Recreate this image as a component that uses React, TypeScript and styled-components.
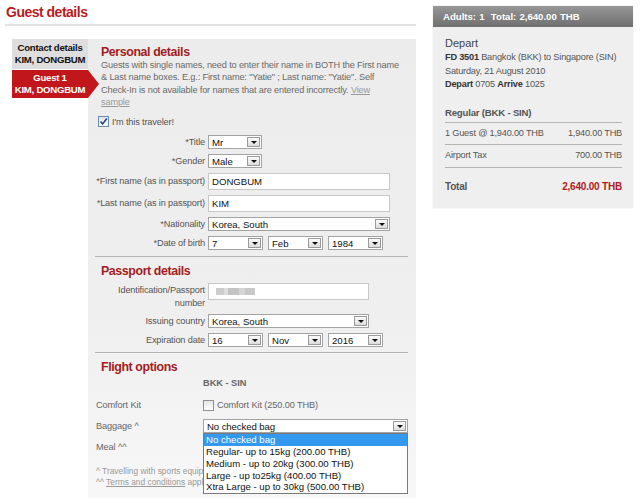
import React from "react";
import styled, { createGlobalStyle } from "styled-components";

const Global = createGlobalStyle`
  html, body { margin: 0; padding: 0; background: #fff; }
  body { font-family: "Liberation Sans", Arial, sans-serif; color: #555; width: 640px; height: 498px; overflow: hidden; }
  * { box-sizing: border-box; }
`;

const Page = styled.div`
  display: flex;
  align-items: flex-start;
  height: 498px;
`;

const Main = styled.div`
  width: 417px;
  padding-left: 5px;
  display: flex;
  flex-direction: column;
  height: 498px;
`;

const Title = styled.h1`
  margin: 0;
  padding: 3px 0 0 1px;
  font-size: 14px;
  line-height: 18px;
  letter-spacing: -0.5px;
  color: #b81c22;
  font-weight: bold;
`;

const Rule = styled.div`
  margin-top: 3px;
  height: 2px;
  background: #e2e2e2;
  width: 411px;
`;

const Body = styled.div`
  display: flex;
  margin-top: 13px;
  flex: 1;
  align-items: stretch;
`;

const Tabs = styled.div`
  width: 83px;
  padding-left: 7px;
  display: flex;
  flex-direction: column;
  gap: 1px;
  position: relative;
  z-index: 2;
`;

const Tab = styled.div<{ $active?: boolean }>`
  position: relative;
  height: ${(p) => (p.$active ? 28 : 30)}px;
  padding-top: ${(p) => (p.$active ? 2 : 3)}px;
  background: ${(p) => (p.$active ? "#c2161d" : "#dedede")};
  color: ${(p) => (p.$active ? "#fff" : "#111")};
  font-weight: bold;
  font-size: 9.6px;
  line-height: 12px;
  text-align: center;
  letter-spacing: -0.25px;
  &::after {
    content: "";
    display: ${(p) => (p.$active ? "block" : "none")};
    position: absolute;
    right: -11px;
    top: 0;
    border-top: 14px solid transparent;
    border-bottom: 14px solid transparent;
    border-left: 11px solid #c2161d;
  }
`;

const Panel = styled.div`
  width: 328px;
  background: linear-gradient(#ececec, #efefef 60%, #f7f7f7);
  padding: 6px 9px 0 13px;
  position: relative;
`;

const SectionTitle = styled.h2<{ $top?: number }>`
  margin: ${(p) => p.$top ?? 0}px 0 0;
  font-size: 12.4px;
  line-height: 14px;
  font-weight: bold;
  letter-spacing: -0.4px;
  color: #a31c22;
`;

const Note = styled.p`
  margin: 0;
  font-size: 9.2px;
  line-height: 12.3px;
  letter-spacing: -0.15px;
  color: #6a6a6a;
  width: 301px;
`;

const Link = styled.a`
  color: #9a9a9a;
  text-decoration: underline;
`;

const CheckRow = styled.label`
  display: flex;
  align-items: center;
  gap: 3px;
  margin: 8px 0 0 -3px;
  font-size: 9.2px;
  letter-spacing: -0.15px;
  color: #555;
`;

const Box = styled.span`
  width: 11px;
  height: 11px;
  border: 1px solid #6d8bb0;
  background: linear-gradient(#dfe5ec, #fff);
  display: inline-flex;
  align-items: center;
  justify-content: center;
  flex: none;
`;

const Form = styled.div<{ $top: number }>`
  display: grid;
  grid-template-columns: 114px auto;
  column-gap: 3px;
  row-gap: 5px;
  margin: ${(p) => p.$top}px 0 0 -10px;
  align-items: center;
`;

const Label = styled.div`
  text-align: right;
  font-size: 9.2px;
  line-height: 12.5px;
  letter-spacing: -0.15px;
  color: #555;
  white-space: nowrap;
  align-self: center;
`;

const TopLabel = styled(Label)`
  align-self: start;
  white-space: normal;
  padding-left: 20px;
  margin-top: 1px;
`;

const Controls = styled.div`
  display: flex;
  gap: 5px;
`;

const SelectBox = styled.div<{ $w: number }>`
  width: ${(p) => p.$w}px;
  height: 14px;
  background: #fff;
  border: 1px solid #a3a3a3;
  display: flex;
  align-items: center;
  justify-content: space-between;
  padding: 0 1px 0 3px;
  font-size: 9.6px;
  color: #111;
`;

const Arrow = styled.span`
  width: 13px;
  height: 10px;
  border: 1px solid #9a9a9a;
  background: linear-gradient(#fbfbfb, #dcdcdc);
  display: flex;
  align-items: center;
  justify-content: center;
  &::before {
    content: "";
    border-left: 3px solid transparent;
    border-right: 3px solid transparent;
    border-top: 3px solid #111;
  }
`;

const TextInput = styled.div<{ $w: number; $top?: boolean }>`
  width: ${(p) => p.$w}px;
  height: 17px;
  background: #fff;
  border: 1px solid #c8c8c8;
  display: flex;
  align-items: center;
  align-self: ${(p) => (p.$top ? "start" : "center")};
  padding: 0 3px;
  font-size: 9.6px;
  color: #111;
`;

const Blur = styled.span`
  width: 39px;
  height: 7px;
  margin-left: 4px;
  background: linear-gradient(90deg, #ccc 0 20%, #ddd 20% 30%, #c4c4c4 30% 60%, #d6d6d6 60% 75%, #c8c8c8 75%);
  filter: blur(0.6px);
`;

const Divider = styled.div<{ $top: number }>`
  height: 1px;
  background: #b5b5b5;
  margin: ${(p) => p.$top}px 0 7px -6px;
  width: 313px;
`;

const Route = styled.div`
  font-size: 9.2px;
  font-weight: bold;
  color: #666;
  margin: 3px 0 0 102px;
  line-height: 12px;
`;

const OptionGrid = styled.div`
  display: grid;
  grid-template-columns: 107px auto;
  grid-auto-rows: 14px;
  row-gap: 7px;
  margin: 9px 0 0 -5px;
  align-items: center;
  font-size: 9.2px;
  letter-spacing: -0.1px;
  color: #666;
`;

const OptCheck = styled.span`
  display: flex;
  align-items: center;
  gap: 3px;
  color: #666;
`;

const GrayBox = styled(Box)`
  border-color: #8f8f8f;
  background: linear-gradient(#e6e6e6, #fff);
`;

const DropWrap = styled.div`
  position: relative;
`;

const DropList = styled.ul`
  position: absolute;
  top: 14px;
  left: 0;
  width: 205px;
  margin: 0;
  padding: 0;
  list-style: none;
  background: #fff;
  border: 1px solid #7a7a7a;
  z-index: 5;
  font-size: 9.6px;
  letter-spacing: 0;
  color: #111;
`;

const DropItem = styled.li<{ $sel?: boolean }>`
  height: 11.8px;
  line-height: 11.8px;
  padding-left: 2px;
  background: ${(p) => (p.$sel ? "#3399ee" : "transparent")};
  color: ${(p) => (p.$sel ? "#fff" : "#111")};
`;

const Footnotes = styled.div`
  margin: 12px 0 0 -5px;
  font-size: 8.4px;
  line-height: 10.5px;
  color: #999;
  white-space: nowrap;
`;

const Side = styled.aside`
  margin: 6px 0 0 16px;
  width: 200px;
  background: #efefef;
  box-shadow: 0 0 1px #ccc;
`;

const SideHead = styled.div`
  height: 21px;
  background: linear-gradient(#979797, #6f6f6f);
  color: #fff;
  font-weight: bold;
  font-size: 9.6px;
  line-height: 21px;
  padding-left: 10px;
  word-spacing: 0.5px;
`;

const SideBody = styled.div`
  padding: 10px 11px 15px 12px;
  font-size: 9.2px;
  letter-spacing: -0.2px;
  color: #555;
  line-height: 13.4px;
  white-space: nowrap;
`;

const SideTitle = styled.div`
  font-size: 11px;
  letter-spacing: 0;
  color: #444;
  margin-bottom: 1px;
`;

const Strong = styled.b`
  color: #333;
`;

const FareName = styled.div`
  font-weight: bold;
  color: #555;
  font-size: 9.6px;
  margin-top: 14px;
  padding-bottom: 3px;
  border-bottom: 1px solid #b5b5b5;
`;

const FareRow = styled.div<{ $total?: boolean }>`
  display: flex;
  justify-content: space-between;
  padding: ${(p) => (p.$total ? "12px 0 0" : "4px 0 4px")};
  border-bottom: ${(p) => (p.$total ? "none" : "1px solid #b5b5b5")};
  font-weight: ${(p) => (p.$total ? "bold" : "normal")};
  font-size: ${(p) => (p.$total ? "10px" : "9.2px")};
`;

const Red = styled.span`
  color: #b01c22;
`;

function Select({ w, value }: { w: number; value: string }) {
  return (
    <SelectBox $w={w}>
      <span>{value}</span>
      <Arrow />
    </SelectBox>
  );
}

const Tick = () => (
  <svg width="9" height="9" viewBox="0 0 9 9">
    <path d="M1.5 4.5 L3.6 7 L7.8 1.5" stroke="#22448a" strokeWidth="1.6" fill="none" />
  </svg>
);

export default function App() {
  return (
    <>
      <Global />
      <Page>
        <Main>
          <Title>Guest details</Title>
          <Rule />
          <Body>
            <Tabs>
              <Tab>
                Contact details
                <br />
                KIM, DONGBUM
              </Tab>
              <Tab $active>
                Guest 1
                <br />
                KIM, DONGBUM
              </Tab>
            </Tabs>
            <Panel>
              <SectionTitle>Personal details</SectionTitle>
              <Note>
                Guests with single names, need to enter their name in BOTH the First name &amp; Last name boxes.
                E.g.: First name: "Yatie" ; Last name: "Yatie". Self Check-In is not available for names that are
                entered incorrectly.{" "}
                <Link>
                  View
                  <br />
                  sample
                </Link>
              </Note>
              <CheckRow>
                <Box>
                  <Tick />
                </Box>
                I'm this traveler!
              </CheckRow>
              <Form $top={8}>
                <Label>*Title</Label>
                <Select w={54} value="Mr" />
                <Label>*Gender</Label>
                <Select w={54} value="Male" />
                <Label>*First name (as in passport)</Label>
                <TextInput $w={182}>DONGBUM</TextInput>
                <Label>*Last name (as in passport)</Label>
                <TextInput $w={182}>KIM</TextInput>
                <Label>*Nationality</Label>
                <Select w={182} value="Korea, South" />
                <Label>*Date of birth</Label>
                <Controls>
                  <Select w={55} value="7" />
                  <Select w={55} value="Feb" />
                  <Select w={55} value="1984" />
                </Controls>
              </Form>
              <Divider $top={6} />
              <SectionTitle>Passport details</SectionTitle>
              <Form $top={5}>
                <TopLabel>Identification/Passport number</TopLabel>
                <TextInput $w={161} $top>
                  <Blur />
                </TextInput>
                <Label>Issuing country</Label>
                <Select w={161} value="Korea, South" />
                <Label>Expiration date</Label>
                <Controls>
                  <Select w={55} value="16" />
                  <Select w={55} value="Nov" />
                  <Select w={55} value="2016" />
                </Controls>
              </Form>
              <Divider $top={5} />
              <SectionTitle $top={3}>Flight options</SectionTitle>
              <Route>BKK - SIN</Route>
              <OptionGrid>
                <span>Comfort Kit</span>
                <OptCheck>
                  <GrayBox />
                  Comfort Kit (250.00 THB)
                </OptCheck>
                <span>Baggage ^</span>
                <DropWrap>
                  <Select w={205} value="No checked bag" />
                  <DropList>
                    <DropItem $sel>No checked bag</DropItem>
                    <DropItem>Regular- up to 15kg (200.00 THB)</DropItem>
                    <DropItem>Medium - up to 20kg (300.00 THB)</DropItem>
                    <DropItem>Large - up to25kg (400.00 THB)</DropItem>
                    <DropItem>Xtra Large - up to 30kg (500.00 THB)</DropItem>
                  </DropList>
                </DropWrap>
                <span>Meal ^^</span>
                <span />
              </OptionGrid>
              <Footnotes>
                ^ Travelling with sports equipment? Please add baggage.
                <br />
                ^^ <Link>Terms and conditions</Link> apply.
              </Footnotes>
            </Panel>
          </Body>
        </Main>
        <Side>
          <SideHead>Adults: 1&nbsp; Total: 2,640.00 THB</SideHead>
          <SideBody>
            <SideTitle>Depart</SideTitle>
            <div>
              <Strong>FD 3501</Strong> Bangkok (BKK) to Singapore (SIN)
            </div>
            <div>Saturday, 21 August 2010</div>
            <div>
              <Strong>Depart</Strong> 0705 <Strong>Arrive</Strong> 1025
            </div>
            <FareName>Regular (BKK - SIN)</FareName>
            <FareRow>
              <span>1 Guest @ 1,940.00 THB</span>
              <span>1,940.00 THB</span>
            </FareRow>
            <FareRow>
              <span>Airport Tax</span>
              <span>700.00 THB</span>
            </FareRow>
            <FareRow $total>
              <span>Total</span>
              <Red>2,640.00 THB</Red>
            </FareRow>
          </SideBody>
        </Side>
      </Page>
    </>
  );
}
